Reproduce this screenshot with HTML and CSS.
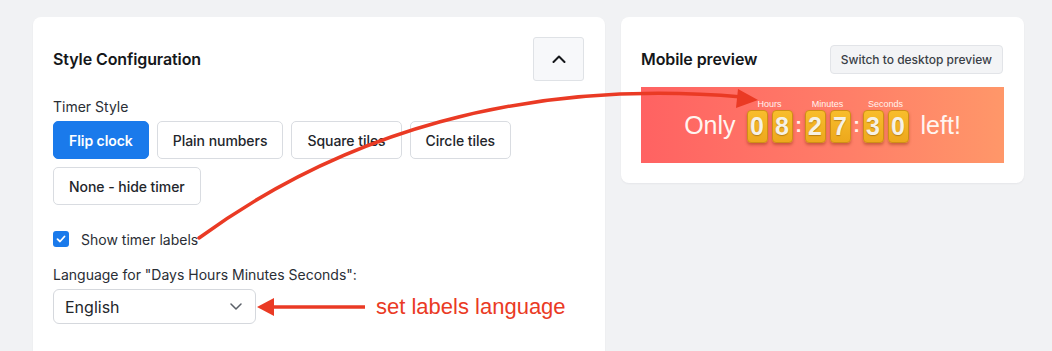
FILE: index.html
```html
<!DOCTYPE html>
<html lang="en">
<head>
<meta charset="utf-8">
<title>Style Configuration</title>
<link rel="stylesheet" href="styles.css">
</head>
<body>
<div class="page">
  <section class="card config">
    <div class="card-head">
      <h2 class="card-title">Style Configuration</h2>
      <button class="collapse" type="button" aria-label="Collapse">
        <svg width="14" height="8" viewBox="0 0 14 8"><polyline points="1.5,7 7,1.5 12.5,7" fill="none" stroke="#15171a" stroke-width="2" stroke-linecap="round" stroke-linejoin="round"/></svg>
      </button>
    </div>
    <div class="field-label">Timer Style</div>
    <div class="style-options">
      <button class="opt active" type="button">Flip clock</button>
      <button class="opt" type="button">Plain numbers</button>
      <button class="opt" type="button">Square tiles</button>
      <button class="opt" type="button">Circle tiles</button>
      <button class="opt" type="button">None - hide timer</button>
    </div>
    <label class="check">
      <span class="box"><svg width="10" height="8" viewBox="0 0 10 8"><polyline points="1.5,4.2 4,6.5 8.5,1.5" fill="none" stroke="#fff" stroke-width="1.8" stroke-linecap="round" stroke-linejoin="round"/></svg></span>
      <span>Show timer labels</span>
    </label>
    <div class="field-label lang-label">Language for "Days Hours Minutes Seconds":</div>
    <div class="select-row">
      <div class="select">
        <span>English</span>
        <svg width="12" height="7" viewBox="0 0 12 7"><polyline points="1,1 6,6 11,1" fill="none" stroke="#5b6068" stroke-width="1.5" stroke-linecap="round" stroke-linejoin="round"/></svg>
      </div>
      <svg class="short-arrow" width="110" height="22" viewBox="0 0 110 22"><polygon points="0,11 17,2 17,20" fill="#ea3a24"/><line x1="15" y1="11" x2="108" y2="11" stroke="#ea3a24" stroke-width="3.5"/></svg>
      <span class="note">set labels language</span>
    </div>
  </section>

  <section class="card preview">
    <div class="card-head preview-head">
      <h2 class="card-title">Mobile preview</h2>
      <button class="switch" type="button">Switch to desktop preview</button>
    </div>
    <div class="banner">
      <span class="banner-text">Only</span>
      <div class="clock">
        <div class="unit">
          <span class="unit-label">Hours</span>
          <div class="digits"><span class="tile">0</span><span class="tile">8</span></div>
        </div>
        <span class="colon">:</span>
        <div class="unit">
          <span class="unit-label">Minutes</span>
          <div class="digits"><span class="tile">2</span><span class="tile">7</span></div>
        </div>
        <span class="colon">:</span>
        <div class="unit">
          <span class="unit-label">Seconds</span>
          <div class="digits"><span class="tile">3</span><span class="tile">0</span></div>
        </div>
      </div>
      <span class="banner-text">left!</span>
    </div>
  </section>

  <svg class="annotation" width="1052" height="351" viewBox="0 0 1052 351">
    <path d="M199 238 C 340 135 520 78 742 97" fill="none" stroke="#ea3a24" stroke-width="3.5" stroke-linecap="round"/>
    <polygon points="758,100 738,89 736,108" fill="#ea3a24"/>
  </svg>
</div>
</body>
</html>
```

FILE: styles.css
```css
* { box-sizing: border-box; }

html, body {
  margin: 0;
  padding: 0;
  background: #f1f2f4;
  font-family: Inter, "Noto Sans", "Liberation Sans", sans-serif;
  color: #1d2025;
  overflow: hidden;
}

.page {
  position: relative;
  display: flex;
  align-items: flex-start;
  gap: 16px;
  padding: 17px 0 0 33px;
  width: 1052px;
  height: 351px;
  overflow: hidden;
}

.card {
  background: #fff;
  border-radius: 8px;
  box-shadow: 0 1px 2px rgba(16, 24, 40, 0.05);
  padding: 20px;
}

.config {
  width: 572px;
  padding-bottom: 60px;
}

.preview {
  width: 403px;
}

.card-head {
  display: flex;
  align-items: center;
  justify-content: space-between;
  height: 44px;
}

.card-title {
  margin: 0;
  font-size: 16px;
  font-weight: 600;
  color: #15171a;
  letter-spacing: -0.1px;
}

.collapse {
  width: 51px;
  height: 44px;
  background: #f7f8fa;
  border: 1px solid #dfe2e6;
  border-radius: 3px;
  display: flex;
  align-items: center;
  justify-content: center;
  padding: 0;
  margin-right: 1px;
}

.field-label {
  margin-top: 16px;
  font-size: 14px;
  line-height: 20px;
  color: #2a2e35;
}

.style-options {
  margin-top: 4px;
  display: flex;
  flex-wrap: wrap;
  gap: 8px;
  width: 470px;
}

.opt {
  height: 38px;
  padding: 0 15px;
  background: #fff;
  border: 1px solid #d9dce1;
  border-radius: 5px;
  font-family: inherit;
  font-size: 14px;
  font-weight: 500;
  letter-spacing: -0.05px;
  color: #23262b;
}

.opt.active {
  background: #1a7aeb;
  border-color: #1a7aeb;
  color: #fff;
  font-weight: 600;
}

.check {
  margin-top: 24px;
  display: flex;
  align-items: center;
  gap: 12px;
  height: 20px;
  font-size: 14px;
  color: #2a2e35;
}

.box {
  width: 16px;
  height: 16px;
  border-radius: 3px;
  background: #1a7aeb;
  display: flex;
  align-items: center;
  justify-content: center;
}

.select-row {
  margin-top: 4px;
  display: flex;
  align-items: center;
}

.select {
  width: 203px;
  height: 35px;
  border: 1px solid #d5d8dd;
  border-radius: 6px;
  padding: 0 13px 0 11px;
  display: flex;
  align-items: center;
  justify-content: space-between;
  font-size: 16px;
  color: #23262b;
}

.short-arrow {
  margin-left: 1px;
  display: block;
}

.note {
  margin-left: 9px;
  font-family: "Liberation Sans", Arial, sans-serif;
  font-size: 22px;
  color: #ea3a24;
  line-height: 24px;
}

.preview-head {
  margin-bottom: 6px;
}

.switch {
  height: 29px;
  padding: 0 10px;
  margin-right: 1px;
  background: #f3f4f6;
  border: 1px solid #e2e4e8;
  border-radius: 4px;
  font-family: inherit;
  font-size: 12px;
  font-weight: 500;
  color: #3a3f47;
}

.banner {
  height: 76px;
  background: linear-gradient(90deg, #ff6262 0%, #ff7d68 55%, #ff9769 100%);
  display: flex;
  align-items: center;
  justify-content: center;
  font-family: "Liberation Sans", Arial, sans-serif;
  color: #fff;
}

.banner-text {
  font-size: 25px;
  color: #fff5f0;
}

.clock {
  display: flex;
  align-items: center;
  margin: 0 12px 0 11px;
}

.unit {
  display: flex;
  flex-direction: column;
  align-items: center;
  padding-bottom: 8px;
}

.unit-label {
  font-size: 9px;
  line-height: 10px;
  height: 10px;
  margin-bottom: 1px;
  color: #fff3ee;
}

.digits {
  display: flex;
  gap: 4px;
}

.tile {
  width: 21px;
  height: 33px;
  display: flex;
  align-items: center;
  justify-content: center;
  background: linear-gradient(#f8bd2c, #eda81c);
  border: 1px solid #cf8f16;
  border-radius: 4px;
  box-shadow: 0 2px 3px rgba(140, 50, 10, 0.45);
  font-size: 25px;
  font-weight: 700;
  color: #f6f1e6;
  text-shadow: 0 1px 1px rgba(120, 70, 0, 0.45);
}

.colon {
  width: 12px;
  height: 33px;
  margin-top: 11px;
  margin-bottom: 8px;
  line-height: 31px;
  text-align: center;
  font-size: 20px;
  font-weight: 700;
  color: #fff3ea;
}

.annotation {
  position: absolute;
  left: 0;
  top: 0;
  pointer-events: none;
}
```
